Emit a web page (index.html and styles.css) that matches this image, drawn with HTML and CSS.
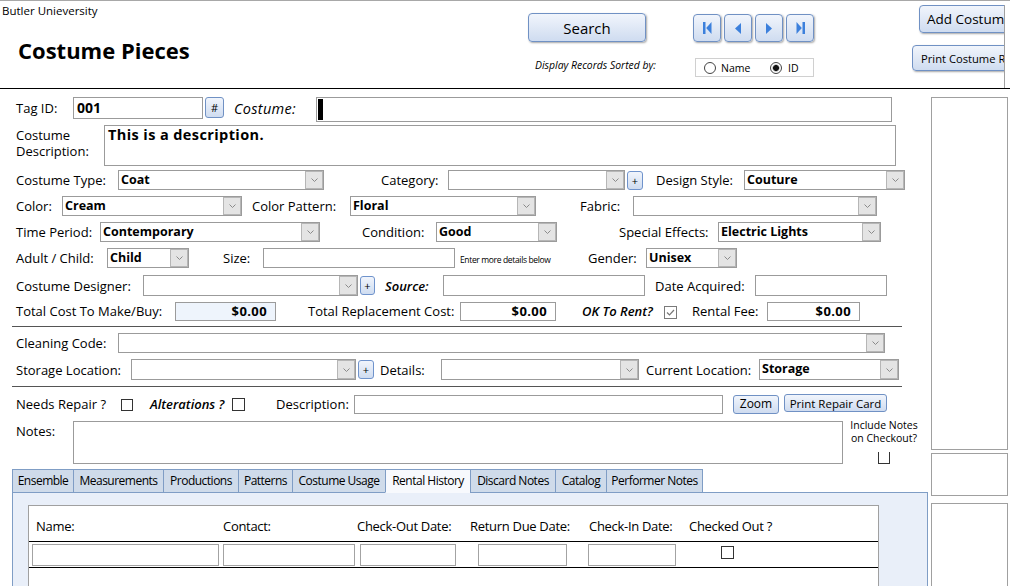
FILE: index.html
```html
<!DOCTYPE html>
<html>
<head>
<meta charset="utf-8">
<title>Costume Pieces</title>
<link rel="stylesheet" href="styles.css">
</head>
<body>
<header class="header">
  <div class="brand">
    <div class="org">Butler Unieversity</div>
    <h1 class="title">Costume Pieces</h1>
  </div>
  <div class="searchcol">
    <button class="btn search">Search</button>
    <div class="sortlbl">Display Records Sorted by:</div>
  </div>
  <div class="navcol">
    <div class="navbtns">
      <button class="btn nav"><svg width="9" height="12" viewBox="0 0 9 12"><rect x="0" y="0" width="2.5" height="12" class="ico"/><polygon points="8.5,0 3.2,6 8.5,12" class="ico"/></svg></button>
      <button class="btn nav"><svg width="6" height="11" viewBox="0 0 6 11"><polygon points="6,0 0,5.5 6,11" class="ico"/></svg></button>
      <button class="btn nav"><svg width="6" height="11" viewBox="0 0 6 11"><polygon points="0,0 6,5.5 0,11" class="ico"/></svg></button>
      <button class="btn nav"><svg width="9" height="12" viewBox="0 0 9 12"><polygon points="0.5,0 5.8,6 0.5,12" class="ico"/><rect x="6.5" y="0" width="2.5" height="12" class="ico"/></svg></button>
    </div>
    <div class="radios">
      <span class="radio"></span><span class="rlbl r1">Name</span>
      <span class="radio on r2"></span><span class="rlbl r3">ID</span>
    </div>
  </div>
  <div class="actions">
    <button class="btn add">Add Costume</button>
    <button class="btn print">Print Costume Report</button>
  </div>
</header>

<div class="main">
  <div class="form">
    <div class="row row1">
      <span class="lbl tagl">Tag ID:</span>
      <div class="inp tagi">001</div>
      <button class="btn hash">#</button>
      <span class="lbl costl">Costume:</span>
      <div class="inp costi"><span class="cursor"></span></div>
    </div>

    <div class="row row2">
      <span class="lbl descl">Costume<br>Description:</span>
      <div class="inp desci">This is a description.</div>
    </div>

    <div class="row row3">
      <span class="lbl typel">Costume Type:</span>
      <div class="cmb typec"><span class="v">Coat</span><span class="dd"><svg width="7" height="4" viewBox="0 0 7 4"><polyline points="0.5,0.5 3.5,3.5 6.5,0.5" class="chev"/></svg></span></div>
      <span class="lbl catl">Category:</span>
      <div class="cmb catc"><span class="v"></span><span class="dd"><svg width="7" height="4" viewBox="0 0 7 4"><polyline points="0.5,0.5 3.5,3.5 6.5,0.5" class="chev"/></svg></span></div>
      <button class="btn plus catp">+</button>
      <span class="lbl dsl">Design Style:</span>
      <div class="cmb dsc"><span class="v">Couture</span><span class="dd"><svg width="7" height="4" viewBox="0 0 7 4"><polyline points="0.5,0.5 3.5,3.5 6.5,0.5" class="chev"/></svg></span></div>
    </div>

    <div class="row row4">
      <span class="lbl colorl">Color:</span>
      <div class="cmb colorc"><span class="v">Cream</span><span class="dd"><svg width="7" height="4" viewBox="0 0 7 4"><polyline points="0.5,0.5 3.5,3.5 6.5,0.5" class="chev"/></svg></span></div>
      <span class="lbl patl">Color Pattern:</span>
      <div class="cmb patc"><span class="v">Floral</span><span class="dd"><svg width="7" height="4" viewBox="0 0 7 4"><polyline points="0.5,0.5 3.5,3.5 6.5,0.5" class="chev"/></svg></span></div>
      <span class="lbl fabl">Fabric:</span>
      <div class="cmb fabc"><span class="v"></span><span class="dd"><svg width="7" height="4" viewBox="0 0 7 4"><polyline points="0.5,0.5 3.5,3.5 6.5,0.5" class="chev"/></svg></span></div>
    </div>

    <div class="row row5">
      <span class="lbl timel">Time Period:</span>
      <div class="cmb timec"><span class="v">Contemporary</span><span class="dd"><svg width="7" height="4" viewBox="0 0 7 4"><polyline points="0.5,0.5 3.5,3.5 6.5,0.5" class="chev"/></svg></span></div>
      <span class="lbl condl">Condition:</span>
      <div class="cmb condc"><span class="v">Good</span><span class="dd"><svg width="7" height="4" viewBox="0 0 7 4"><polyline points="0.5,0.5 3.5,3.5 6.5,0.5" class="chev"/></svg></span></div>
      <span class="lbl sfxl">Special Effects:</span>
      <div class="cmb sfxc"><span class="v">Electric Lights</span><span class="dd"><svg width="7" height="4" viewBox="0 0 7 4"><polyline points="0.5,0.5 3.5,3.5 6.5,0.5" class="chev"/></svg></span></div>
    </div>

    <div class="row row6">
      <span class="lbl acl">Adult / Child:</span>
      <div class="cmb acc"><span class="v">Child</span><span class="dd"><svg width="7" height="4" viewBox="0 0 7 4"><polyline points="0.5,0.5 3.5,3.5 6.5,0.5" class="chev"/></svg></span></div>
      <span class="lbl sizel">Size:</span>
      <div class="inp sizei"></div>
      <span class="lbl note">Enter more details below</span>
      <span class="lbl genl">Gender:</span>
      <div class="cmb genc"><span class="v">Unisex</span><span class="dd"><svg width="7" height="4" viewBox="0 0 7 4"><polyline points="0.5,0.5 3.5,3.5 6.5,0.5" class="chev"/></svg></span></div>
    </div>

    <div class="row row7">
      <span class="lbl desl">Costume Designer:</span>
      <div class="cmb desc"><span class="v"></span><span class="dd"><svg width="7" height="4" viewBox="0 0 7 4"><polyline points="0.5,0.5 3.5,3.5 6.5,0.5" class="chev"/></svg></span></div>
      <button class="btn plus desp">+</button>
      <span class="lbl em srcl">Source:</span>
      <div class="inp srci"></div>
      <span class="lbl datel">Date Acquired:</span>
      <div class="inp datei"></div>
    </div>

    <div class="row row8">
      <span class="lbl tcl">Total Cost To Make/Buy:</span>
      <div class="inp money tci">$0.00</div>
      <span class="lbl trl">Total Replacement Cost:</span>
      <div class="inp money tri">$0.00</div>
      <span class="lbl em okl">OK To Rent?</span>
      <span class="chk okc"><svg width="11" height="11" viewBox="0 0 11 11"><polyline points="2,5.5 4.5,8 9,3" class="tick"/></svg></span>
      <span class="lbl rfl">Rental Fee:</span>
      <div class="inp money rfi">$0.00</div>
    </div>

    <div class="sep sep1"></div>

    <div class="row row9">
      <span class="lbl ccl">Cleaning Code:</span>
      <div class="cmb ccc"><span class="v"></span><span class="dd"><svg width="7" height="4" viewBox="0 0 7 4"><polyline points="0.5,0.5 3.5,3.5 6.5,0.5" class="chev"/></svg></span></div>
    </div>

    <div class="row row10">
      <span class="lbl sll">Storage Location:</span>
      <div class="cmb slc"><span class="v"></span><span class="dd"><svg width="7" height="4" viewBox="0 0 7 4"><polyline points="0.5,0.5 3.5,3.5 6.5,0.5" class="chev"/></svg></span></div>
      <button class="btn plus slp">+</button>
      <span class="lbl dtl">Details:</span>
      <div class="cmb dtc"><span class="v"></span><span class="dd"><svg width="7" height="4" viewBox="0 0 7 4"><polyline points="0.5,0.5 3.5,3.5 6.5,0.5" class="chev"/></svg></span></div>
      <span class="lbl cll">Current Location:</span>
      <div class="cmb clc"><span class="v">Storage</span><span class="dd"><svg width="7" height="4" viewBox="0 0 7 4"><polyline points="0.5,0.5 3.5,3.5 6.5,0.5" class="chev"/></svg></span></div>
    </div>

    <div class="sep sep2"></div>

    <div class="row row11">
      <span class="lbl nrl">Needs Repair ?</span>
      <span class="chk nrc"></span>
      <span class="lbl em altl">Alterations ?</span>
      <span class="chk altc"></span>
      <span class="lbl dscl">Description:</span>
      <div class="inp dsci"></div>
      <button class="btn small zoombtn">Zoom</button>
      <button class="btn small prcbtn">Print Repair Card</button>
    </div>

    <div class="row row12">
      <span class="lbl notesl">Notes:</span>
      <div class="inp notesi"></div>
      <div class="incl">
        <div class="incltxt">Include Notes<br>on Checkout?</div>
        <span class="chk inclc"></span>
      </div>
    </div>

    <div class="tabs">
      <span class="tab t1">Ensemble</span>
      <span class="tab t2">Measurements</span>
      <span class="tab t3">Productions</span>
      <span class="tab t4">Patterns</span>
      <span class="tab t5">Costume Usage</span>
      <span class="tab t6 active">Rental History</span>
      <span class="tab t7">Discard Notes</span>
      <span class="tab t8">Catalog</span>
      <span class="tab t9 last">Performer Notes</span>
    </div>
    <div class="panel">
      <div class="sub">
        <div class="subhead">
          <span class="sh h1">Name:</span>
          <span class="sh h2">Contact:</span>
          <span class="sh h3">Check-Out Date:</span>
          <span class="sh h4">Return Due Date:</span>
          <span class="sh h5">Check-In Date:</span>
          <span class="sh h6">Checked Out ?</span>
        </div>
        <div class="subrow">
          <div class="sinp s1"></div>
          <div class="sinp s2"></div>
          <div class="sinp s3"></div>
          <div class="sinp s4"></div>
          <div class="sinp s5"></div>
          <span class="chk s6"></span>
        </div>
      </div>
    </div>
  </div>

  <aside class="side">
    <div class="sbox sbox1"></div>
    <div class="sbox sbox2"></div>
    <div class="sbox sbox3"></div>
  </aside>
</div>
</body>
</html>
```

FILE: styles.css
```css
* { box-sizing: border-box; margin: 0; padding: 0; }
html, body { width: 1010px; height: 586px; overflow: hidden; background: #fff; }
body { font-family: "Open Sans", "Noto Sans", sans-serif; font-size: 13px; color: #000; }

button { font-family: inherit; color: #000; cursor: default; }

.btn {
  background: linear-gradient(#f1f5fc, #cfdcf0);
  border: 1px solid #7091c4;
  border-radius: 4px;
  box-shadow: 1px 1px 2px rgba(0, 0, 0, .35);
  flex: none;
}

/* ---------- header ---------- */
.header {
  display: flex;
  height: 89px;
  border-top: 1px solid #a8a8a8;
  border-bottom: 1px solid #000;
}
.brand { width: 528px; flex: none; }
.org { font-size: 11.5px; line-height: 14px; padding: 3px 0 0 2px; }
.title { font-size: 22px; font-weight: 700; line-height: 26px; margin: 19px 0 0 18px; }

.searchcol { width: 131px; flex: none; padding-top: 12px; }
.search { display: block; width: 118px; height: 29px; font-size: 15px; }
.sortlbl { margin: 17px 0 0 7px; font-size: 10.4px; font-style: italic; line-height: 13px; white-space: nowrap; }

.navcol { margin-left: 34px; width: 121px; flex: none; padding-top: 13px; }
.navbtns { display: flex; gap: 3px; height: 28px; }
.nav { width: 28px; height: 28px; display: flex; align-items: center; justify-content: center; }
.ico { fill: #3c80dc; }
.radios {
  margin: 16px 0 0 2px;
  width: 119px;
  height: 19px;
  border: 1px solid #d0d0d0;
  display: flex;
  align-items: center;
  font-size: 10.5px;
}
.radio {
  width: 12px; height: 12px;
  border: 1px solid #444;
  border-radius: 50%;
  background: #fff;
  margin-left: 8px;
  flex: none;
}
.radio.on { background: radial-gradient(circle, #111 0 2.6px, #aaa 3.2px, #fff 4px); }
.rlbl { line-height: 14px; }
.r1 { margin-left: 5px; width: 27px; }
.r2 { margin-left: 22px; }
.r3 { margin-left: 6px; }

.actions {
  margin: 4px 0 0 98px;
  width: 93px;
  flex: none;
  border-right: 1px solid #a0a0a0;
  overflow: hidden;
  display: flex;
  flex-direction: column;
  align-items: flex-start;
}
.add { margin-left: 7px; width: 110px; height: 28px; font-size: 13.5px; text-align: left; padding-left: 7px; white-space: nowrap; overflow: hidden; }
.print { margin-top: 12px; width: 150px; height: 26px; font-size: 11.2px; text-align: left; padding-left: 8px; white-space: nowrap; overflow: hidden; }

/* ---------- main ---------- */
.main { display: flex; }
.form { width: 928px; flex: none; }
.side { margin-left: 3px; width: 77px; flex: none; padding-top: 8px; }
.sbox { border: 1px solid #a0a0a0; }
.sbox1 { height: 353px; }
.sbox2 { margin-top: 3px; height: 43px; }
.sbox3 { margin-top: 7px; height: 90px; }

.row { display: flex; align-items: center; }
.row1 { margin-top: 8px; height: 25px; align-items: flex-start; }
.row2 { margin-top: 3px; height: 41px; align-items: flex-start; }
.row3 { margin-top: 4px; height: 20px; }
.row4 { margin-top: 6px; height: 20px; }
.row5 { margin-top: 6px; height: 20px; }
.row6 { margin-top: 6px; height: 20px; }
.row7 { margin-top: 7px; height: 21px; }
.row8 { margin-top: 5px; height: 20px; }
.row9 { margin-top: 6px; height: 20px; }
.row10 { margin-top: 6px; height: 21px; }
.row11 { margin-top: 7px; height: 20px; }
.row12 { margin-top: 7px; height: 43px; align-items: flex-start; }

.sep { margin-left: 12px; width: 890px; border-top: 1px solid #555; }
.sep1 { margin-top: 5px; }
.sep2 { margin-top: 6px; }

.lbl { white-space: nowrap; flex: none; line-height: 18px; }
.em { font-style: italic; font-weight: 600; }

.inp {
  border: 1px solid #9b9b9b;
  background: #fff;
  flex: none;
  height: 100%;
}
.cmb {
  border: 1px solid #9b9b9b;
  background: #fff;
  display: flex;
  height: 100%;
  flex: none;
  font-weight: 700;
  font-size: 12.5px;
}
.cmb .v { flex: 1; padding-left: 2px; line-height: 18px; white-space: nowrap; overflow: hidden; }
.cmb .dd {
  width: 18px;
  flex: none;
  background: #e4e4e4;
  border: 1px solid #b6b6b6;
  display: flex;
  align-items: center;
  justify-content: center;
}
.chev { fill: none; stroke: #8a8a8a; stroke-width: 1; }

.plus {
  height: 19px;
  border-radius: 3px;
  font-size: 11px;
  line-height: 15px;
  box-shadow: none;
  border-color: #6f93cc;
}

.chk {
  width: 12px; height: 12px;
  border: 1px solid #333;
  background: #fff;
  flex: none;
  display: flex;
  align-items: center;
  justify-content: center;
}
.tick { fill: none; stroke: #777; stroke-width: 1.2; }

.money { font-weight: 700; font-size: 13px; letter-spacing: .4px; text-align: right; padding-right: 8px; line-height: 17px; }

/* row 1 */
.tagl { margin-left: 16px; width: 57px; line-height: 22px; }
.tagi { width: 130px; height: 22px; font-weight: 700; font-size: 14px; padding-left: 3px; line-height: 20px; }
.hash { margin-left: 2px; width: 19px; height: 21px; border-radius: 3px; font-size: 11px; box-shadow: none; }
.costl { margin-left: 10px; width: 82px; font-style: italic; font-size: 14.5px; letter-spacing: .3px; line-height: 24px; }
.costi { width: 576px; height: 25px; }
.cursor { display: block; width: 5px; height: 21px; background: #000; margin: 1px 0 0 1px; }

/* row 2 */
.descl { margin-left: 16px; width: 88px; line-height: 16px; padding-top: 2px; }
.desci { width: 792px; height: 41px; font-weight: 700; font-size: 14.5px; letter-spacing: .4px; line-height: 18px; padding-left: 3px; }

/* row 3 */
.typel { margin-left: 16px; width: 102px; }
.typec { width: 206px; }
.catl { margin-left: 57px; width: 67px; }
.catc { width: 177px; }
.catp { margin-left: 2px; width: 16px; }
.dsl { margin-left: 13px; width: 88px; }
.dsc { width: 161px; }

/* row 4 */
.colorl { margin-left: 16px; width: 46px; }
.colorc { width: 180px; }
.patl { margin-left: 10px; width: 98px; }
.patc { width: 186px; }
.fabl { margin-left: 44px; width: 53px; }
.fabc { width: 244px; }

/* row 5 */
.timel { margin-left: 16px; width: 84px; }
.timec { width: 220px; }
.condl { margin-left: 42px; width: 74px; }
.condc { width: 121px; }
.sfxl { margin-left: 62px; width: 99px; }
.sfxc { width: 163px; }

/* row 6 */
.acl { margin-left: 16px; width: 91px; }
.acc { width: 82px; }
.sizel { margin-left: 34px; width: 40px; }
.sizei { width: 192px; }
.note { margin-left: 5px; width: 128px; font-size: 8.5px; letter-spacing: -.35px; padding-top: 3px; }
.genl { width: 58px; }
.genc { width: 91px; }

/* row 7 */
.desl { margin-left: 16px; width: 127px; }
.desc { width: 215px; }
.desp { margin-left: 2px; width: 15px; }
.srcl { margin-left: 10px; width: 58px; }
.srci { width: 202px; }
.datel { margin-left: 10px; width: 100px; }
.datei { width: 132px; }

/* row 8 */
.tcl { margin-left: 16px; width: 159px; }
.tci { width: 101px; height: 19px; background: #eef4fc; }
.trl { margin-left: 32px; width: 152px; }
.tri { width: 96px; height: 19px; }
.okl { margin-left: 26px; width: 82px; }
.okc { width: 13px; height: 13px; border-color: #7a7a7a; margin-top: 3px; }
.rfl { margin-left: 15px; width: 75px; }
.rfi { width: 93px; height: 19px; }

/* row 9 */
.ccl { margin-left: 16px; width: 102px; }
.ccc { width: 767px; }

/* row 10 */
.sll { margin-left: 16px; width: 115px; }
.slc { width: 225px; }
.slp { margin-left: 2px; width: 16px; }
.dtl { margin-left: 6px; width: 61px; }
.dtc { width: 198px; }
.cll { margin-left: 7px; width: 113px; }
.clc { width: 140px; }

/* row 11 */
.nrl { margin-left: 16px; width: 105px; }
.nrc { margin-top: 1px; }
.altl { margin-left: 17px; width: 82px; }
.altc { width: 13px; height: 13px; }
.dscl { margin-left: 31px; width: 78px; }
.dsci { width: 369px; height: 19px; }
.small { border-radius: 3px; box-shadow: none; }
.zoombtn { margin-left: 10px; width: 46px; height: 19px; font-size: 12px; line-height: 16px; }
.prcbtn { margin-left: 5px; width: 103px; height: 18px; font-size: 11.5px; line-height: 15px; align-self: flex-start; }

/* row 12 */
.notesl { margin-left: 16px; width: 57px; padding-top: 1px; }
.notesi { width: 770px; height: 43px; }
.incl { margin-left: 6px; width: 70px; flex: none; display: flex; flex-direction: column; align-items: center; }
.incltxt { font-size: 10.5px; line-height: 13px; text-align: center; white-space: nowrap; margin-top: -2px; }
.inclc { margin-top: 7px; border-top: none; }

/* tabs */
.tabs {
  margin: 5px 0 -1px 12px;
  display: flex;
  height: 24px;
  position: relative;
  z-index: 1;
}
.tab {
  flex: none;
  border: 1px solid #7f9dc5;
  border-right: none;
  background: #cfdbea;
  font-size: 12px;
  letter-spacing: -.5px;
  text-align: center;
  line-height: 22px;
  white-space: nowrap;
}
.tab.last { border-right: 1px solid #7f9dc5; }
.tab.active { background: #f7f9fd; border-bottom-color: #f7f9fd; }
.t1 { width: 61px; }
.t2 { width: 90px; }
.t3 { width: 75px; }
.t4 { width: 54px; }
.t5 { width: 93px; }
.t6 { width: 85px; }
.t7 { width: 85px; }
.t8 { width: 51px; }
.t9 { width: 97px; }

.panel {
  margin-left: 12px;
  width: 916px;
  height: 110px;
  border: 1px solid #7f9dc5;
  background: #e9eff9;
  padding: 12px 0 0 15px;
}
.sub { width: 851px; height: 100px; background: #fff; border: 1px solid #a0a0a0; }
.subhead {
  display: flex;
  height: 36px;
  padding-top: 11px;
  border-bottom: 1px solid #000;
  font-size: 13px;
  letter-spacing: -.3px;
}
.sh { flex: none; line-height: 18px; white-space: nowrap; }
.h1 { margin-left: 7px; width: 187px; }
.h2 { width: 134px; }
.h3 { width: 113px; }
.h4 { width: 119px; }
.h5 { width: 100px; }
.subrow { display: flex; align-items: flex-start; height: 26px; border-bottom: 1px solid #000; }
.sinp { flex: none; height: 22px; margin-top: 2px; border: 1px solid #a3a3a3; background: #fff; }
.s1 { margin-left: 3px; width: 187px; }
.s2 { margin-left: 4px; width: 132px; }
.s3 { margin-left: 5px; width: 96px; }
.s4 { margin-left: 22px; width: 89px; }
.s5 { margin-left: 21px; width: 88px; }
.s6 { margin-left: 45px; margin-top: 4px; width: 13px; height: 13px; }
```
